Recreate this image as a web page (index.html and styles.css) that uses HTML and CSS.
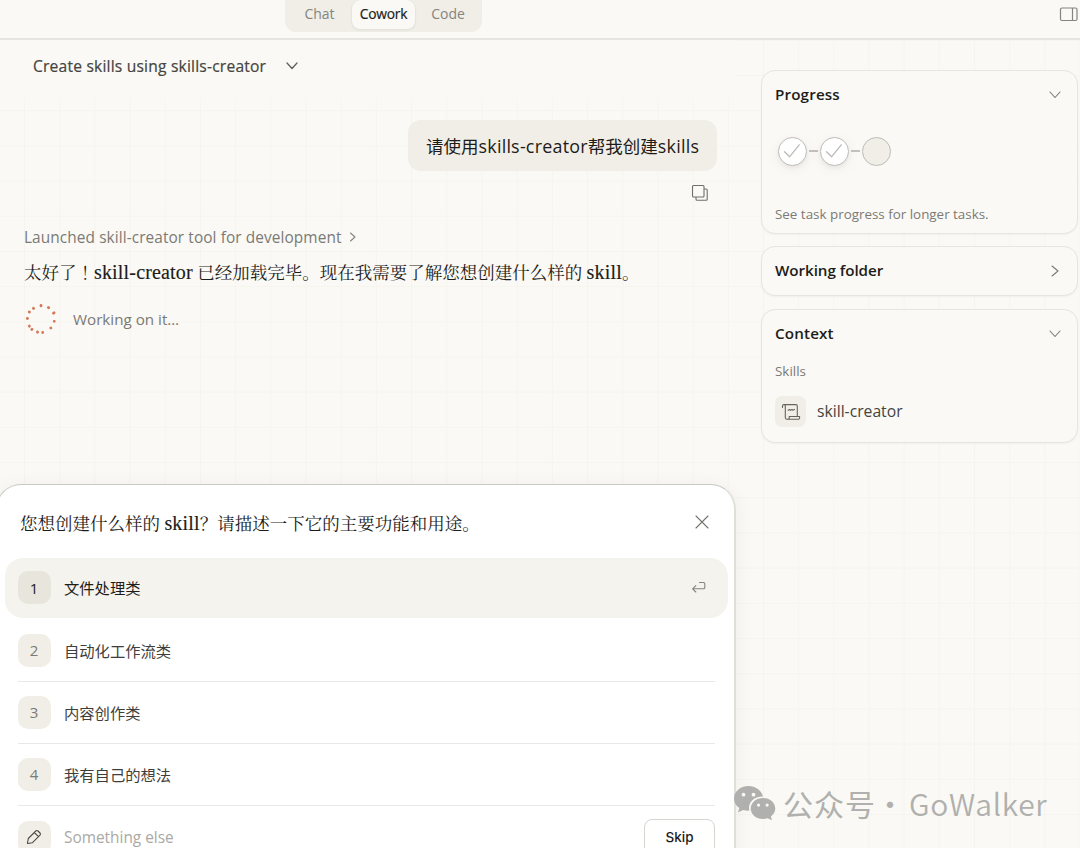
FILE: index.html
```html
<!DOCTYPE html>
<html lang="zh-CN">
<head>
<meta charset="utf-8">
<title>Cowork</title>
<link rel="stylesheet" href="styles.css">
</head>
<body>
<div class="app">
  <header class="topbar">
    <nav class="tabs"><span class="tab tab-chat">Chat</span><span class="tab active">Cowork</span><span class="tab tab-code">Code</span></nav>
    <svg class="panel-icon" width="20" height="16" viewBox="0 0 20 16" fill="none" stroke="#85847f" stroke-width="1.2"><rect x="1.5" y="2" width="16.500" height="12.500" rx="1.500"/><path d="M13.500 2v12.500"/></svg>
  </header>
  <div class="body">
    <main class="main">
      <div class="title"><span class="t-title">Create skills using skills-creator</span>
        <svg width="14" height="10" viewBox="0 0 14 10" fill="none" stroke="#5c5b57" stroke-width="1.2" stroke-linecap="round" stroke-linejoin="round"><path d="M2 2l5 5.500L12 2"/></svg>
      </div>
      <div class="chat">
        <div class="bubble"><span class="t-bubble">请使用<span class="latin">skills-creator</span>帮我创建<span class="latin">skills</span></span></div>
        <svg class="copy" width="18" height="18" viewBox="0 0 18 18" fill="none" stroke="#6f6e69" stroke-width="1.1"><rect x="1.500" y="1.500" width="11.500" height="11.500" rx="1"/><path d="M13 5h2.200a1 1 0 0 1 1 1v9.200a1 1 0 0 1-1 1H6a1 1 0 0 1-1-1V13"/></svg>
        <div class="launched"><span class="t-launched">Launched skill-creator tool for development</span>
          <svg width="8" height="12" viewBox="0 0 8 12" fill="none" stroke="#85847f" stroke-width="1.1" stroke-linecap="round" stroke-linejoin="round"><path d="M1.500 2l4.500 4-4.500 4"/></svg>
        </div>
        <div class="reply serif"><span class="t-reply">太好了<span class="mark" lang="zh-TW">！</span><span class="en">skill-creator</span> 已经加载完毕。现在我需要了解您想创建什么样的 <span class="en">skill</span>。</span></div>
        <div class="working">
          <svg width="34" height="34" viewBox="0 0 34 34" fill="none" stroke="#d5795a" stroke-width="2.800" stroke-linecap="round"><path d="M17 2.400v.5M24.400 4.500l.3.3M29.500 10.200l.6-.4M30.200 18.300h.1M26.800 25l.1.1M18.700 29.400v.2M13.500 28.900l.1.3M7.800 26.400l.2-.2M5.300 23.100l.1.1M3.300 15.500h.2M5.200 9l.2.1M9.400 5.300l.2.2"/></svg>
          <span class="t-working">Working on it…</span>
        </div>
      </div>
      <section class="ask">
        <div class="ask-head serif"><span class="t-ask">您想创建什么样的 <span class="en">skill</span>？请描述一下它的主要功能和用途。</span>
          <svg width="16" height="16" viewBox="0 0 16 16" fill="none" stroke="#73726d" stroke-width="1.1" stroke-linecap="round"><path d="M2 2l12 12M14 2L2 14"/></svg>
        </div>
        <div class="row selected"><span class="num">1</span><span class="opt">文件处理类</span>
          <svg class="enter" width="16" height="14" viewBox="0 0 16 14" fill="none" stroke="#85847f" stroke-width="1.1" stroke-linecap="round" stroke-linejoin="round"><path d="M8.500 1.500h4a1.300 1.300 0 0 1 1.300 1.300v3.600a1.300 1.300 0 0 1-1.300 1.300H1.600M4.800 4.600L1.600 7.800 4.800 11"/></svg>
        </div>
        <div class="row line"><span class="num">2</span><span class="opt">自动化工作流类</span></div>
        <div class="row line"><span class="num">3</span><span class="opt">内容创作类</span></div>
        <div class="row line"><span class="num">4</span><span class="opt">我有自己的想法</span></div>
        <div class="row last"><span class="num"><svg width="18" height="18" viewBox="0 0 18 18" fill="none" stroke="#4b4a46" stroke-width="1.1" stroke-linejoin="round"><path d="M2.400 15.500l.9-5L10.800 3a1.600 1.600 0 0 1 2.200 0l2 2a1.600 1.600 0 0 1 0 2.200l-7.500 7.500zM9.300 4.500l4.200 4.200"/></svg></span><span class="else">Something else</span><span class="skip">Skip</span></div>
      </section>
    </main>
    <aside class="side">
      <section class="card progress">
        <div class="card-head"><span class="h-progress">Progress</span><svg class="chev" width="14" height="10" viewBox="0 0 14 10"><path d="M2 2l5 5.500L12 2"/></svg></div>
        <div class="steps">
          <span class="step done"><svg width="18" height="16" viewBox="0 0 18 16"><path d="M1.500 8.700l5.200 5L16.200 1.800"/></svg></span><i class="dash"></i>
          <span class="step done"><svg width="18" height="16" viewBox="0 0 18 16"><path d="M1.500 8.700l5.200 5L16.200 1.800"/></svg></span><i class="dash"></i>
          <span class="step"></span>
        </div>
        <p class="note"><span class="t-note">See task progress for longer tasks.</span></p>
      </section>
      <section class="card folder">
        <div class="card-head"><span class="h-folder">Working folder</span><svg class="chev" width="14" height="14" viewBox="0 0 14 14"><path d="M4 2l6 5-6 5"/></svg></div>
      </section>
      <section class="card context">
        <div class="card-head"><span class="h-context">Context</span><svg class="chev" width="14" height="10" viewBox="0 0 14 10"><path d="M2 2l5 5.500L12 2"/></svg></div>
        <p class="label"><span class="t-label">Skills</span></p>
        <div class="skill"><span class="skill-icon"><svg width="20" height="18" viewBox="0 0 20 18" fill="none" stroke="#65645f" stroke-width="1.1" stroke-linecap="round" stroke-linejoin="round"><path d="M1.500 4.500V3a1.400 1.400 0 0 1 2.800 0v11.500a1.800 1.800 0 0 0 1.800 1.800H17a1.600 1.600 0 0 0 1.600-1.600v-1.200H8.200v1.400a1.500 1.500 0 0 1-1.900 1.400M2.900 1.600h12a1.400 1.400 0 0 1 1.400 1.400v10.300M7.200 7.300l1.200-.8 1.200.8 1.300-.8 1.200.8 1.400-.9"/></svg></span><span class="t-skill">skill-creator</span></div>
      </section>
    </aside>
  </div>
  <div class="watermark">
    <svg width="43" height="36" viewBox="0 0 43 36"><path fill="#b0b0ae" fill-rule="evenodd" d="M15.500 1C7.300 1 1 6.500 1 13.500c0 4 2 7.300 5.400 9.600L5 27.500l5-2.600c2 .6 4 .9 6.300.8C14.500 17.500 21 11.400 30 11.500 28.500 5.300 22.500 1 15.500 1zM10.500 7.800a1.900 1.900 0 1 1 0 3.800 1.900 1.900 0 0 1 0-3.800zm10 0a1.900 1.900 0 1 1 0 3.800 1.900 1.900 0 0 1 0-3.800z"/><path fill="#b0b0ae" fill-rule="evenodd" d="M30 13c-7 0-12.300 4.700-12.300 10.500S23 34 30 34c1.700 0 3.300-.2 4.700-.7l4.300 2-1.100-3.700c2.700-2 4.400-4.700 4.400-8C42.300 17.700 37 13 30 13zm-4.400 5.500a1.600 1.600 0 1 1 0 3.200 1.600 1.600 0 0 1 0-3.200zm8.500 0a1.600 1.600 0 1 1 0 3.200 1.600 1.600 0 0 1 0-3.200z"/></svg>
    <span class="wm-cn">公众号</span><span class="wm-dot">·</span><span class="wm-en">GoWalker</span>
  </div>
</div>
</body>
</html>
```
FILE: styles.css
```css
* { box-sizing: border-box; }
body { margin: 0; overflow: hidden; font-family: "Open Sans", "Noto Sans CJK SC", sans-serif; color: #1d1c19; }
svg { display: block; flex: none; }
span { white-space: nowrap; }
.app { position: relative; width: 1080px; height: 848px; overflow: hidden; display: flex; flex-direction: column; background: #faf9f5; }

.topbar { height: 40px; flex: none; border-bottom: 2px solid #e6e5df; display: flex; align-items: flex-start; padding-left: 285px; }
.tabs { width: 197px; height: 32px; background: #f0eee7; border-radius: 0 0 11px 11px; display: flex; font-size: 14px; line-height: 28px; color: #85847f; }
.tab { display: block; text-align: center; height: 30px; }
.tab-chat { width: 66px; padding-left: 3px; }
.tab-code { width: 66px; padding-right: 2px; }
.active { width: 65px; background: #faf9f5; color: #1d1c19; font-size: 13.800px; font-weight: 500; letter-spacing: -.2px; -webkit-text-stroke: .2px; border: 1px solid #e6e4dc; border-top: 0; border-radius: 9px; box-shadow: 0 1px 2px rgba(0,0,0,.04); }
.panel-icon { margin: 6px 0 0 577px; }

.body { flex: 1; min-height: 0; display: flex; background-color: #faf9f5; background-image: linear-gradient(90deg, #f5f4ef 1px, transparent 1px), linear-gradient(#f5f4ef 1px, transparent 1px); background-size: 35.200px 35.200px; background-position: 24px 35px; }
.main { width: 735px; flex: none; display: flex; flex-direction: column; }
.title { height: 68px; flex: none; padding: 0 0 16px 33px; display: flex; align-items: center; gap: 19px; background: linear-gradient(#faf9f5 75%, rgba(250,249,245,0)); font-size: 15.600px; font-weight: 500; letter-spacing: .2px; color: #454440; -webkit-text-stroke: .2px; }
.chat { height: 376px; flex: none; padding: 12px 18px 0 24px; display: flex; flex-direction: column; align-items: flex-start; }
.bubble { align-self: flex-end; width: 309px; height: 51px; padding: 0 0 1px 18px; border-radius: 13px; background: #f0eee7; display: flex; align-items: center; font-size: 17.500px; }
.latin { font-size: 17.900px; letter-spacing: .23px; }
.copy { align-self: flex-end; margin: 13px 8.500px 0 0; }
.launched { height: 24px; margin-top: 23px; display: flex; align-items: center; gap: 7px; font-size: 15.400px; letter-spacing: .09px; color: #7b7a75; }
.serif { font-family: "Liberation Serif", "Noto Serif CJK SC", "Noto Sans CJK SC", serif; font-size: 17.500px; font-weight: 400; }
.mark { font-family: "Noto Serif CJK TC", "Noto Sans CJK TC", serif; }
.en { font-size: 20px; letter-spacing: .17px; -webkit-text-stroke: .15px; }
.reply { height: 30px; margin-top: 7px; display: flex; align-items: center; }
.working { height: 34px; margin-top: 16.500px; display: flex; align-items: center; gap: 15px; font-size: 15.200px; color: #7b7a75; }
.t-working { padding-bottom: 2px; }

.ask { flex: none; width: 740px; height: 400px; margin-left: -4px; padding-left: 3px; background: #fff; border: 1px solid #c9c8c2; border-right: 2px solid #e0dfda; border-radius: 25px; box-shadow: 0 3px 20px rgba(60,55,40,.06); }
.ask-head { height: 72.500px; padding: 2px 24.500px 0 20px; display: flex; align-items: center; justify-content: space-between; }
.row { height: 62px; margin: 0 19px 0 17.500px; display: flex; align-items: center; gap: 13.500px; font-size: 15.300px; color: #3f3e3a; }
.selected { height: 60.500px; width: 723.500px; margin: 0 0 1.500px 4.500px; padding: 0 21px 0 13px; border-radius: 18px; background: #f4f3ee; color: #1d1c19; }
.opt { padding-bottom: 1px; }
.line { border-bottom: 1px solid #e9e8e4; }
.last { padding-top: 1px; }
.num { width: 33px; height: 33px; border-radius: 10px; background: #f0eee7; color: #7b7a75; display: flex; align-items: center; justify-content: center; font-size: 15px; flex: none; }
.selected .num { background: #e7e5dc; color: #1d1c19; }
.enter { margin-left: auto; }
.else { font-size: 15.400px; color: #aaa9a4; }
.skip { margin-left: auto; width: 71px; height: 36px; border: 1px solid #d6d5cf; border-radius: 8px; color: #1d1c19; font: 500 13.500px/34px Inter, sans-serif; text-align: center; }

.side { width: 317px; margin: 30px 0 0 26px; display: flex; flex-direction: column; gap: 12px; }
.card { background: #faf9f5; border: 1px solid #e6e5df; border-radius: 14px; box-shadow: 0 1px 2px rgba(0,0,0,.04); padding: 0 15px 0 13px; }
.progress { height: 164px; }
.folder { height: 50px; }
.context { height: 134px; margin-top: 1px; }
.card-head { height: 48px; display: flex; align-items: center; justify-content: space-between; font-size: 15.200px; font-weight: 600; }
.card-head span { padding-bottom: 2px; }
.h-progress, .h-context { letter-spacing: .15px; }
.h-folder { letter-spacing: -.05px; }
.chev { fill: none; stroke: #7b7a75; stroke-width: 1.1; stroke-linecap: round; stroke-linejoin: round; }
.steps { height: 30px; margin: 17px 0 0 2.500px; display: flex; align-items: center; }
.step { width: 29px; height: 29px; border-radius: 50%; border: 1px solid #bdbcb7; background: #f0eee7; display: flex; align-items: center; justify-content: center; }
.done { background: #fff; box-shadow: 0 3px 14px rgba(0,0,0,.05), 0 2px 4px rgba(0,0,0,.05); }
.done svg { fill: none; stroke: #bcbbb7; stroke-width: 1.300; stroke-linecap: round; stroke-linejoin: round; }
.dash { width: 9px; height: 1.500px; margin: 0 2px; background: #c2c1bb; }
.note, .label { margin: 0; font-size: 13.400px; color: #7b7a75; }
.note { margin-top: 38px; line-height: 20px; }
.label { margin-top: 3px; line-height: 20px; }
.skill { margin-top: 15px; display: flex; align-items: center; gap: 11px; font-size: 15.700px; color: #454440; }
.t-skill { padding-bottom: 2px; }
.skill-icon { width: 31px; height: 31px; border-radius: 7px; background: #f0eee7; display: flex; align-items: center; justify-content: center; }

/* Account mark laid over the lower right corner */
.watermark { position: absolute; left: 733px; top: 784.500px; height: 36px; display: flex; align-items: center; font: 400 30px/36px "Noto Sans CJK SC", sans-serif; color: #b0b0ae; }
.wm-cn { margin-left: 7px; letter-spacing: 1px; }
.wm-dot { margin-left: -1px; }
.wm-en { margin-left: 4px; font-weight: 350; letter-spacing: .700px; }
```
